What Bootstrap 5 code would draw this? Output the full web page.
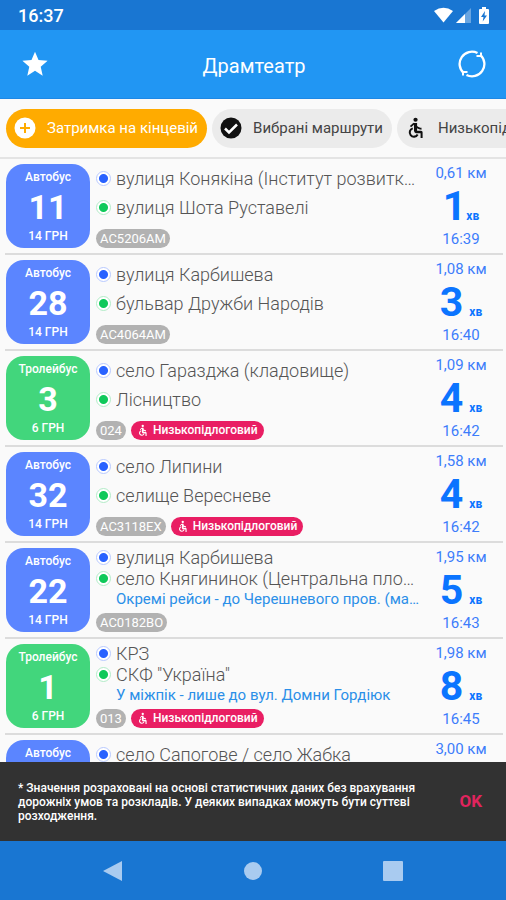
<!DOCTYPE html>
<html lang="uk">
<head>
<meta charset="utf-8">
<meta name="viewport" content="width=device-width, initial-scale=1">
<title>Драмтеатр</title>
<link href="https://cdn.jsdelivr.net/npm/bootstrap@5.3.0/dist/css/bootstrap.min.css" rel="stylesheet">
<style>
  body { font-family: Roboto, "Noto Sans", sans-serif; background: #fafafa; line-height: 1.2; }
  .status-bar { background: #1976d2; height: 30px; font-size: 18px; padding: 2px 16px 0 18px; }
  .app-bar { background: #2196f3; height: 69px; padding: 0 20px; border-bottom: 1px solid #1e88e5; }
  .app-bar h1 { font-size: 20px; padding-top: 3px; }
  .chips { height: 60px; padding: 0 6px; gap: 5px; border-bottom: 2px solid #e4e4e4; }
  .chip { height: 39px; padding: 0 9px 0 8px; gap: 11px; font-size: 15px; background: #ebebeb; color: #444; }
  .chip-on { background: #ffab00; color: #fff; }
  .trip { height: 96px; padding: 5px 0 5px 1px; margin: 0 3px 0 5px; border-bottom: 2px solid #dcdcdc; }
  .tile { width: 84px; height: 84px; border-radius: 18px; background: #5b85ff; font-size: 12px; padding: 6px 0 5px; }
  .tile-trolley { background: #42d67c; }
  .tile b { font-size: 34px; line-height: 36px; }
  .stops { padding-left: 6px; height: 84px; }
  .stop { font-size: 18px; line-height: 29px; font-weight: 300; color: #555; gap: 5px; }
  .with-note .stop { line-height: 21px; }
  .with-note .note { font-size: 15px; line-height: 21px; color: #2b8fe8; padding-left: 20px; }
  .with-note { margin-top: -1px; }
  .dot { width: 15px; height: 15px; border: 1px solid #b9caff; background: radial-gradient(circle, #2962ff 0 4px, #fff 5px); }
  .dot-end { border-color: #b3ecc8; background: radial-gradient(circle, #0fc95a 0 4px, #fff 5px); }
  .tags { gap: 5px; }
  .tag { font-size: 13px; line-height: 19px; padding: 0 4px; background: #b2b2b2; color: #fff; }
  .tag-low { background: #e91e63; font-size: 12px; padding: 0 6px; gap: 4px; }
  .eta { width: 80px; height: 84px; margin-right: 2px; color: #3d7dfa; font-size: 15px; }
  .eta span, .eta time { line-height: 18px; }
  .eta strong { font-size: 41px; line-height: 42px; color: #0b74ff; }
  .eta small { font-size: 12px; font-weight: 700; color: #0b74ff; }
  .eta .gap-hv { gap: 6px; }
  .notice { background: #323232; height: 79px; padding: 0 20px 0 18px; font-size: 12px; line-height: 14px; color: #fff; }
  .notice p { max-width: 410px; }
  .notice button { color: #e0245e; font-size: 17px; }
  .sys-nav { background: #1976d2; height: 59px; padding: 0 43px; }
</style>
<script src="https://cdn.jsdelivr.net/npm/bootstrap@5.3.0/dist/js/bootstrap.bundle.min.js" defer></script>
</head>
<body class="d-flex flex-column vh-100 overflow-hidden">
<svg class="d-none" aria-hidden="true">
  <symbol id="wheelchair" viewBox="0 0 24 24">
    <circle cx="11.5" cy="3" r="2.3"/>
    <path d="M9.8 6.5h3.4v3.2c1.3 1.3 3 1.9 4.8 1.9v2.2c-1.8 0-3.500-.5-4.800-1.400v2.600h4.300c1 0 1.700.8 1.700 1.700V23H17v-5.200h-5.200A3.200 3.200 0 0 1 9.800 15z"/>
    <path d="M8.500 12.400a4.600 4.600 0 1 0 5.300 6.600" fill="none" stroke="currentColor" stroke-width="2.200"/>
    <path d="M10 7 6 10.500" stroke="currentColor" stroke-width="2"/>
  </symbol>
</svg>

<div class="status-bar d-flex align-items-center justify-content-between flex-shrink-0 text-white fw-medium">
  <span>16:37</span>
  <svg width="56" height="18" viewBox="0 0 56 18" fill="#fff" aria-label="Wi-Fi, мережа, батарея">
    <path d="M0 4Q9.500-2.500 19 4L9.500 15.500z"/>
    <path d="M37 1v15H22z" opacity=".35"/>
    <path d="M31 7v9h-9z"/>
    <path fill-rule="evenodd" d="M48 0h4v2h2q1 0 1 1v13q0 1-1 1h-8q-1 0-1-1V3q0-1 1-1h2zM51 4l-4 6h2.500l-.8 4.500L53 8.500h-2.500z"/>
  </svg>
</div>

<header class="app-bar d-flex align-items-center justify-content-between flex-shrink-0 text-white">
  <button class="btn p-0 border-0 text-white lh-1" aria-label="Вибране">
    <svg width="30" height="28" viewBox="0 0 24 24" fill="currentColor"><path d="M12 17.800 18.600 22l-1.700-7.600L22.800 9.300 15 8.600 12 1.500 9 8.600 1.200 9.300l5.900 5.100L5.400 22z"/></svg>
  </button>
  <h1 class="m-0 fw-normal">Драмтеатр</h1>
  <button class="btn p-0 border-0 text-white lh-1" aria-label="Оновити">
    <svg width="28" height="28" viewBox="0 0 28 28" fill="none" stroke="currentColor" stroke-width="2.300"><path d="M5.800 23.200A12.300 12.300 0 0 1 19.500 3M22.200 4.800A12.300 12.300 0 0 1 8.500 25"/><path d="M18.500 6h4.500V2.500M9.500 22H5v3.500" stroke-width="2"/></svg>
  </button>
</header>

<nav class="chips d-flex align-items-center flex-shrink-0 overflow-hidden" aria-label="Фільтри">
  <button class="chip chip-on btn border-0 rounded-pill d-flex align-items-center flex-shrink-0 text-nowrap">
    <svg width="22" height="22" viewBox="0 0 22 22"><circle cx="11" cy="11" r="10.500" fill="#fff"/><path d="M11 6v10M6 11h10" stroke="#ffab00" stroke-width="2"/></svg>
    Затримка на кінцевій
  </button>
  <button class="chip btn border-0 rounded-pill d-flex align-items-center flex-shrink-0 text-nowrap">
    <svg width="22" height="22" viewBox="0 0 22 22"><circle cx="11" cy="11" r="10.500" fill="#111"/><path d="m5 11.500 4 4 8-8" fill="none" stroke="#fff" stroke-width="2.500"/></svg>
    Вибрані маршрути
  </button>
  <button class="chip btn border-0 rounded-pill d-flex align-items-center flex-shrink-0 text-nowrap">
    <svg width="22" height="22" fill="#111" color="#111"><use href="#wheelchair"/></svg>
    Низькопідлоговий
  </button>
</nav>

<main class="flex-grow-1 overflow-hidden">
<ul class="list-unstyled m-0">
  <li class="trip d-flex">
    <div class="tile d-flex flex-column align-items-center justify-content-between flex-shrink-0 text-white fw-medium"><span>Автобус</span><b>11</b><span>14 ГРН</span></div>
    <div class="stops d-flex flex-column justify-content-between flex-grow-1 overflow-hidden">
      <div>
        <div class="stop d-flex align-items-center"><i class="dot rounded-circle flex-shrink-0"></i><span class="text-truncate">вулиця Конякіна (Інститут розвитку освіти)</span></div>
        <div class="stop d-flex align-items-center"><i class="dot dot-end rounded-circle flex-shrink-0"></i><span class="text-truncate">вулиця Шота Руставелі</span></div>
      </div>
      <div class="tags d-flex"><span class="tag rounded-pill">AC5206AM</span></div>
    </div>
    <div class="eta d-flex flex-column align-items-center justify-content-between flex-shrink-0"><span>0,61 км</span><div class="d-flex align-items-baseline"><strong>1</strong><small>хв</small></div><time>16:39</time></div>
  </li>
  <li class="trip d-flex">
    <div class="tile d-flex flex-column align-items-center justify-content-between flex-shrink-0 text-white fw-medium"><span>Автобус</span><b>28</b><span>14 ГРН</span></div>
    <div class="stops d-flex flex-column justify-content-between flex-grow-1 overflow-hidden">
      <div>
        <div class="stop d-flex align-items-center"><i class="dot rounded-circle flex-shrink-0"></i><span class="text-truncate">вулиця Карбишева</span></div>
        <div class="stop d-flex align-items-center"><i class="dot dot-end rounded-circle flex-shrink-0"></i><span class="text-truncate">бульвар Дружби Народів</span></div>
      </div>
      <div class="tags d-flex"><span class="tag rounded-pill">AC4064AM</span></div>
    </div>
    <div class="eta d-flex flex-column align-items-center justify-content-between flex-shrink-0"><span>1,08 км</span><div class="gap-hv d-flex align-items-baseline"><strong>3</strong><small>хв</small></div><time>16:40</time></div>
  </li>
  <li class="trip d-flex">
    <div class="tile tile-trolley d-flex flex-column align-items-center justify-content-between flex-shrink-0 text-white fw-medium"><span>Тролейбус</span><b>3</b><span>6 ГРН</span></div>
    <div class="stops d-flex flex-column justify-content-between flex-grow-1 overflow-hidden">
      <div>
        <div class="stop d-flex align-items-center"><i class="dot rounded-circle flex-shrink-0"></i><span class="text-truncate">село Гаразджа (кладовище)</span></div>
        <div class="stop d-flex align-items-center"><i class="dot dot-end rounded-circle flex-shrink-0"></i><span class="text-truncate">Лісництво</span></div>
      </div>
      <div class="tags d-flex"><span class="tag rounded-pill">024</span><span class="tag tag-low rounded-pill d-flex align-items-center fw-medium"><svg width="12" height="13" fill="#fff" color="#fff"><use href="#wheelchair"/></svg>Низькопідлоговий</span></div>
    </div>
    <div class="eta d-flex flex-column align-items-center justify-content-between flex-shrink-0"><span>1,09 км</span><div class="gap-hv d-flex align-items-baseline"><strong>4</strong><small>хв</small></div><time>16:42</time></div>
  </li>
  <li class="trip d-flex">
    <div class="tile d-flex flex-column align-items-center justify-content-between flex-shrink-0 text-white fw-medium"><span>Автобус</span><b>32</b><span>14 ГРН</span></div>
    <div class="stops d-flex flex-column justify-content-between flex-grow-1 overflow-hidden">
      <div>
        <div class="stop d-flex align-items-center"><i class="dot rounded-circle flex-shrink-0"></i><span class="text-truncate">село Липини</span></div>
        <div class="stop d-flex align-items-center"><i class="dot dot-end rounded-circle flex-shrink-0"></i><span class="text-truncate">селище Вересневе</span></div>
      </div>
      <div class="tags d-flex"><span class="tag rounded-pill">AC3118EX</span><span class="tag tag-low rounded-pill d-flex align-items-center fw-medium"><svg width="12" height="13" fill="#fff" color="#fff"><use href="#wheelchair"/></svg>Низькопідлоговий</span></div>
    </div>
    <div class="eta d-flex flex-column align-items-center justify-content-between flex-shrink-0"><span>1,58 км</span><div class="gap-hv d-flex align-items-baseline"><strong>4</strong><small>хв</small></div><time>16:42</time></div>
  </li>
  <li class="trip d-flex">
    <div class="tile d-flex flex-column align-items-center justify-content-between flex-shrink-0 text-white fw-medium"><span>Автобус</span><b>22</b><span>14 ГРН</span></div>
    <div class="stops d-flex flex-column justify-content-between flex-grow-1 overflow-hidden">
      <div class="with-note">
        <div class="stop d-flex align-items-center"><i class="dot rounded-circle flex-shrink-0"></i><span class="text-truncate">вулиця Карбишева</span></div>
        <div class="stop d-flex align-items-center"><i class="dot dot-end rounded-circle flex-shrink-0"></i><span class="text-truncate">село Княгининок (Центральна площа)</span></div>
        <div class="note text-truncate">Окремі рейси - до Черешневого пров. (магазин)</div>
      </div>
      <div class="tags d-flex"><span class="tag rounded-pill">AC0182BO</span></div>
    </div>
    <div class="eta d-flex flex-column align-items-center justify-content-between flex-shrink-0"><span>1,95 км</span><div class="gap-hv d-flex align-items-baseline"><strong>5</strong><small>хв</small></div><time>16:43</time></div>
  </li>
  <li class="trip d-flex">
    <div class="tile tile-trolley d-flex flex-column align-items-center justify-content-between flex-shrink-0 text-white fw-medium"><span>Тролейбус</span><b>1</b><span>6 ГРН</span></div>
    <div class="stops d-flex flex-column justify-content-between flex-grow-1 overflow-hidden">
      <div class="with-note">
        <div class="stop d-flex align-items-center"><i class="dot rounded-circle flex-shrink-0"></i><span class="text-truncate">КРЗ</span></div>
        <div class="stop d-flex align-items-center"><i class="dot dot-end rounded-circle flex-shrink-0"></i><span class="text-truncate">СКФ "Україна"</span></div>
        <div class="note text-truncate">У міжпік - лише до вул. Домни Гордіюк</div>
      </div>
      <div class="tags d-flex"><span class="tag rounded-pill">013</span><span class="tag tag-low rounded-pill d-flex align-items-center fw-medium"><svg width="12" height="13" fill="#fff" color="#fff"><use href="#wheelchair"/></svg>Низькопідлоговий</span></div>
    </div>
    <div class="eta d-flex flex-column align-items-center justify-content-between flex-shrink-0"><span>1,98 км</span><div class="gap-hv d-flex align-items-baseline"><strong>8</strong><small>хв</small></div><time>16:45</time></div>
  </li>
  <li class="trip d-flex">
    <div class="tile d-flex flex-column align-items-center flex-shrink-0 text-white fw-medium"><span>Автобус</span></div>
    <div class="stops flex-grow-1 overflow-hidden">
      <div class="stop d-flex align-items-center"><i class="dot rounded-circle flex-shrink-0"></i><span class="text-truncate">село Сапогове / село Жабка</span></div>
    </div>
    <div class="eta d-flex flex-column align-items-center flex-shrink-0"><span>3,00 км</span></div>
  </li>
</ul>
</main>

<div class="notice d-flex align-items-center justify-content-between flex-shrink-0 fw-medium" role="status">
  <p class="m-0">* Значення розраховані на основі статистичних даних без врахування дорожніх умов та розкладів. У деяких випадках можуть бути суттєві розходження.</p>
  <button class="btn border-0 p-1 fw-bold">OK</button>
</div>

<nav class="sys-nav d-flex align-items-center justify-content-around flex-shrink-0" aria-label="Системна навігація">
  <button class="btn border-0 p-0 lh-1" aria-label="Назад"><svg width="20" height="20" fill="#a9cbf0"><path d="M19 0v20L0 10z"/></svg></button>
  <button class="btn border-0 p-0 lh-1" aria-label="Додому"><svg width="20" height="20" fill="#a9cbf0"><circle cx="10" cy="10" r="9"/></svg></button>
  <button class="btn border-0 p-0 lh-1" aria-label="Огляд"><svg width="20" height="20" fill="#a9cbf0"><rect width="20" height="20" rx="1"/></svg></button>
</nav>
</body>
</html>
